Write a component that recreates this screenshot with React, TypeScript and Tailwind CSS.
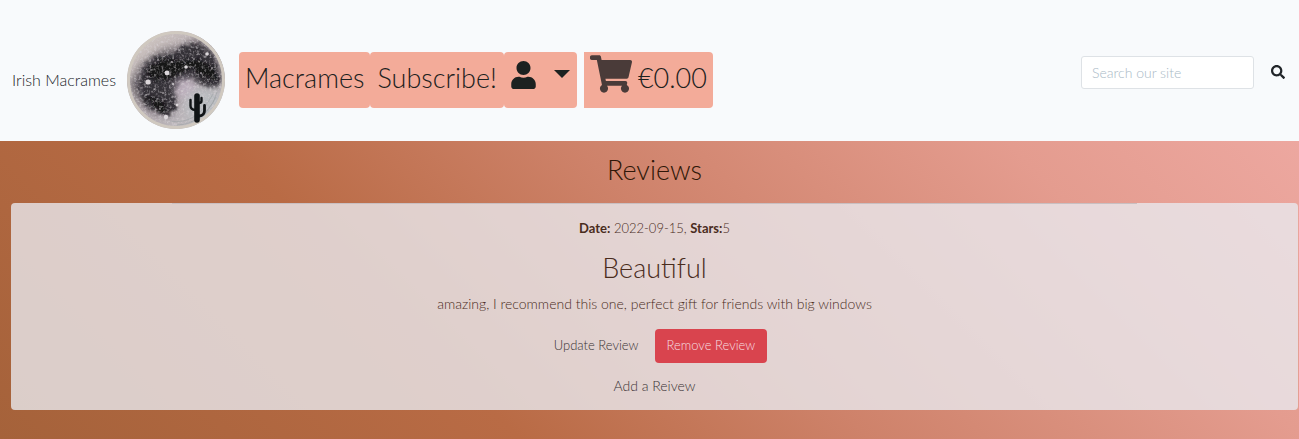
import React from "react";
import { FaSearch, FaShoppingCart, FaUser } from "react-icons/fa";

const stars: [number, number, number][] = [
  [40, 42, 2.4], [59, 36, 1.8], [21, 51, 2.6], [39, 86, 2.2], [80, 23, 1.8], [50, 74, 1.4],
  [31, 29, 0.8], [52, 19, 0.8], [67, 28, 0.7], [74, 42, 0.8], [36, 62, 0.8], [29, 70, 0.7],
  [46, 53, 0.9], [62, 50, 0.7], [85, 37, 0.8], [19, 64, 0.7], [24, 39, 0.7], [45, 31, 0.8],
  [70, 17, 0.7], [55, 60, 0.8], [33, 78, 0.7], [90, 48, 0.6], [14, 57, 0.6], [27, 58, 0.6],
];

function MoonLogo() {
  return (
    <svg viewBox="0 0 98 98" className="size-[98px] shrink-0" role="img" aria-label="Moon and cactus">
      <defs>
        <clipPath id="disc"><circle cx="49" cy="49" r="49" /></clipPath>
        <linearGradient id="base" x1="0" y1="0" x2="1" y2="1">
          <stop offset="0" stopColor="#d6cdc6" />
          <stop offset="0.5" stopColor="#b5abb0" />
          <stop offset="1" stopColor="#c2c3c6" />
        </linearGradient>
        <filter id="rough" x="-20%" y="-20%" width="140%" height="140%">
          <feTurbulence type="fractalNoise" baseFrequency="0.3" numOctaves="4" seed="8" result="n" />
          <feDisplacementMap in="SourceGraphic" in2="n" scale="14" xChannelSelector="R" yChannelSelector="G" />
          <feGaussianBlur stdDeviation="0.9" />
        </filter>
        <filter id="speckle" x="0" y="0" width="100%" height="100%">
          <feTurbulence type="fractalNoise" baseFrequency="0.4" numOctaves="3" seed="4" />
          <feColorMatrix values="0 0 0 0 0.72  0 0 0 0 0.68  0 0 0 0 0.71  3 0 0 0 -1.4" />
          <feGaussianBlur stdDeviation="0.35" />
        </filter>
        <filter id="soft" x="-50%" y="-50%" width="200%" height="200%"><feGaussianBlur stdDeviation="4" /></filter>
        <filter id="glow" x="-100%" y="-100%" width="300%" height="300%"><feGaussianBlur stdDeviation="0.7" /></filter>
      </defs>
      <g clipPath="url(#disc)">
        <rect width="98" height="98" fill="url(#base)" />
        <path d="M14 34 34 20l24-5 14-7 16 13 8 22-3 12-18-2-14-6-11 6-2 14-4 16-16-1-16-11-9-18Z" fill="#5e595f" filter="url(#soft)" />
        <g filter="url(#rough)">
          <path d="M16 36 30 25l17-2 9-9 16-1 14 12 7 22-3 10-14-3-12-8-12 6-6 11 5 12-7 10-13-3-14-10-5-16Z" fill="#353238" />
          <path d="M22 36 36 27l20 3 14-2 18 8 2 14-11-2-16-10-16 10-14 2-14-3ZM17 64l16 3 9 10-4 5-11-4Z" fill="#121216" />
        </g>
        <ellipse cx="58" cy="57" rx="11" ry="11" fill="#c0b1c1" opacity="0.75" filter="url(#soft)" />
        <ellipse cx="76" cy="74" rx="18" ry="16" fill="#b8bdc1" opacity="0.8" filter="url(#soft)" />
        <rect width="98" height="98" filter="url(#speckle)" opacity="0.5" />
        <g fill="#dcd7da" filter="url(#glow)">
          {stars.map(([x, y, r]) => <circle key={`${x}-${y}`} cx={x} cy={y} r={r} />)}
        </g>
        <path d="M43 90q26 5 43-27M50 94q25-1 39-28M64 91q20-8 26-30" fill="none" stroke="#9ba0a3" strokeWidth="0.8" opacity="0.7" />
        <circle cx="49" cy="49" r="47.5" fill="none" stroke="#d0c9c0" strokeWidth="3" />
      </g>
      <g fill="none" stroke="#101416" strokeLinecap="round">
        <path d="M70 65v24" strokeWidth="5.6" />
        <path d="M63.500 69v6q0 3.500 5 4M74.500 67v3q0 2-3 2" strokeWidth="2.400" />
        <path d="M72 85q5.500-.5 5.500-5.500v-5" strokeWidth="2.800" />
      </g>
    </svg>
  );
}

export default function App() {
  return (
    <div className="min-h-screen bg-[linear-gradient(45deg,#a5623a_0%,#b96b45_30%,#ce826a_50%,#e49c8f_75%,#f1ada8_100%)] font-[Lato,'Liberation_Sans',sans-serif] text-sm font-light text-[#212529]">
      <header className="flex items-center bg-[#f8fafc] px-3 pt-[31px] pb-3">
        <a href="#home" className="flex items-center gap-[11px] text-base whitespace-nowrap">
          Irish Macrames
          <MoonLogo />
        </a>
        <nav className="ml-[14px] flex h-14 items-stretch text-[27px] whitespace-nowrap text-[#1c2120]">
          <a href="#macrames" className="flex items-center rounded bg-[#f3ab99] px-1.5 pb-1">Macrames</a>
          <a href="#subscribe" className="flex items-center rounded bg-[#f3ab99] px-[7px] pb-1">Subscribe!</a>
          <button type="button" aria-label="Account" className="flex items-start gap-[18px] rounded bg-[#f3ab99] px-[7px] pt-[9px]">
            <FaUser className="h-7 w-[25px]" />
            <svg viewBox="0 0 16 8" className="mt-[9px] h-2 w-4" fill="currentColor"><path d="M0 0h16L8 8Z" /></svg>
          </button>
          <a href="#cart" aria-label="Cart" className="ml-[7px] flex items-center gap-1.5 rounded-r bg-[#f3ab99] px-1.5 pb-1">
            <FaShoppingCart className="mb-2 h-[38px] w-[42px] text-[#4a3b39]" />
            €0.00
          </a>
        </nav>
        <form className="mb-4 ml-auto flex items-center" onSubmit={(e) => e.preventDefault()}>
          <input type="search" aria-label="Search our site" placeholder="Search our site" className="h-[33px] w-[173px] rounded-[3px] border border-[#dee2e6] bg-white px-[10px] placeholder:text-[#a9b9c6]" />
          <button type="submit" aria-label="Search" className="ml-[17px] pr-0.5 text-[#212529]"><FaSearch className="size-3.5" /></button>
        </form>
      </header>
      <main className="pt-[11px] pr-px pb-7 pl-[11px] text-center">
        <h1 className="mb-[15px] text-[27px] leading-9 text-[#2f1708]">Reviews</h1>
        <section className="rounded bg-[#e9e9ee]/80 pb-[14px] text-[#4a2c1d]">
          <hr className="mx-auto w-3/4 border-[#c9bfc1]" />
          <p className="pt-[14px] text-[13px] leading-5"><strong className="font-bold">Date:</strong> 2022-09-15, <strong className="font-bold">Stars:</strong>5</p>
          <h2 className="mt-3 text-[27px] leading-9">Beautiful</h2>
          <p className="mt-2 leading-5">amazing, I recommend this one, perfect gift for friends with big windows</p>
          <div className="mt-[15px] flex items-center justify-center gap-1 text-[13px] text-[#3a3335]">
            <button type="button" className="h-[34px] rounded px-3 pb-0.5">Update Review</button>
            <button type="button" className="h-[34px] rounded bg-[#d9444e] px-3 pb-0.5 text-[#f6dfe0]">Remove Review</button>
          </div>
          <a href="#add-review" className="mt-[13px] inline-block leading-5 text-[#3a3335]">Add a Reivew</a>
        </section>
      </main>
    </div>
  );
}
